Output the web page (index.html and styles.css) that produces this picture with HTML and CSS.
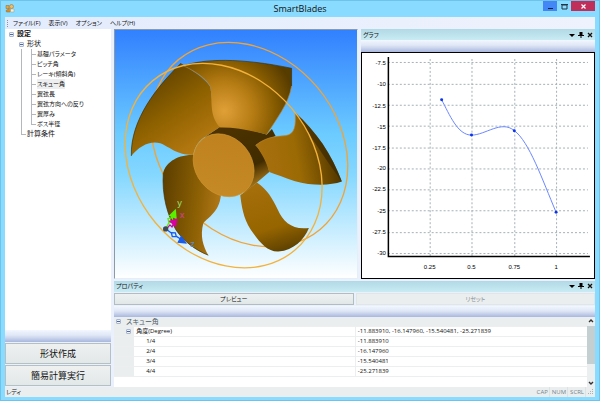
FILE: index.html
```html
<!DOCTYPE html>
<html lang="ja">
<head>
  <meta charset="UTF-8" />
  <meta name="viewport" content="width=device-width, initial-scale=1.0"/>
  <title>SmartBlades</title>
  <link rel="stylesheet" href="styles.css">
</head>
<body>
  <div class="window">
    <header class="titlebar">
      <svg class="appIcon" width="10" height="9" viewBox="0 0 20 18">
        <path d="M2 3h6v6H2z" fill="#e9a63c" stroke="#8a6a3a"/>
        <circle cx="13" cy="5" r="4" fill="#f2bd62" stroke="#8a6a3a"/>
        <path d="M2 13l7-4 4 3-3 4H3z" fill="#d98f2a" stroke="#8a6a3a"/>
        <path d="M11 10h7v6h-7z" fill="#f4f0dc" stroke="#9a9a80"/>
      </svg>
      <h1>SmartBlades</h1>
      <div class="winButtons">
        <button class="minimize" aria-label="最小化"><svg width="7" height="7" viewBox="0 0 7 7"><path d="M1 5h5v1H1z" fill="#123"/></svg></button>
        <button class="maximize" aria-label="最大化"><svg width="7" height="7" viewBox="0 0 7 7"><path d="M1 2h5v4H1z" fill="none" stroke="#234"/><path d="M0 1h7v1H0z" fill="#234"/></svg></button>
        <button class="close" aria-label="閉じる"><svg width="7" height="7" viewBox="0 0 7 7"><path d="M1.5 1.5l4 4M5.5 1.5l-4 4" stroke="#fff" stroke-width="1.2"/></svg></button>
      </div>
    </header>

    <div class="client">
      <nav class="menu">
        <span class="grip"></span>
        <button>ファイル(F)</button>
        <button>表示(V)</button>
        <button>オプション</button>
        <button>ヘルプ(H)</button>
      </nav>

      <main class="workspace">
        <aside class="sidebar">
          <ul class="tree">
            <li class="root"><span class="toggle"></span>設定</li>
            <li class="branch"><span class="toggle"></span>形状</li>
            <li class="leaf">基礎パラメータ</li>
            <li class="leaf">ピッチ角</li>
            <li class="leaf">レーキ(傾斜角)</li>
            <li class="leaf selected"><span>スキュー角</span></li>
            <li class="leaf">翼弦長</li>
            <li class="leaf">翼弦方向への反り</li>
            <li class="leaf">翼厚み</li>
            <li class="leaf last">ボス半径</li>
            <li class="branch end">計算条件</li>
          </ul>
          <div class="band"></div>
          <div class="actions">
            <button>形状作成</button>
            <button>簡易計算実行</button>
          </div>
        </aside>

        <div class="content">
          <div class="upper">
            <section class="viewer">
              <svg viewBox="-18 -18 726 744" role="img" aria-label="プロペラ">
                <defs>
                  <linearGradient id="bladeA" x1="0.2" y1="0.1" x2="0.75" y2="0.95">
                    <stop offset="0" stop-color="#5c3f00"/>
                    <stop offset="0.5" stop-color="#8f6200"/>
                    <stop offset="1" stop-color="#b87a12"/>
                  </linearGradient>
                  <radialGradient id="bladeB" gradientUnits="userSpaceOnUse" cx="310" cy="225" r="215">
                    <stop offset="0" stop-color="#e0a038"/>
                    <stop offset="0.4" stop-color="#b67c14"/>
                    <stop offset="0.7" stop-color="#875c00"/>
                    <stop offset="1" stop-color="#573c00"/>
                  </radialGradient>
                  <linearGradient id="bladeC" x1="0" y1="0.5" x2="1" y2="0.35">
                    <stop offset="0" stop-color="#a97010"/>
                    <stop offset="0.45" stop-color="#9b6a04"/>
                    <stop offset="0.75" stop-color="#6d4a00"/>
                    <stop offset="1" stop-color="#3f2b00"/>
                  </linearGradient>
                  <linearGradient id="bladeD" x1="0.3" y1="0" x2="0.6" y2="1">
                    <stop offset="0" stop-color="#a66f0c"/>
                    <stop offset="0.65" stop-color="#966500"/>
                    <stop offset="1" stop-color="#5e4100"/>
                  </linearGradient>
                  <linearGradient id="bladeE" x1="0" y1="0.3" x2="1" y2="0.5">
                    <stop offset="0" stop-color="#5d3f00"/>
                    <stop offset="0.6" stop-color="#8c6004"/>
                    <stop offset="1" stop-color="#b27818"/>
                  </linearGradient>
                  <linearGradient id="hubSide" gradientUnits="userSpaceOnUse" x1="340" y1="280" x2="420" y2="450">
                    <stop offset="0" stop-color="#4b3200"/>
                    <stop offset="0.65" stop-color="#402b00"/>
                    <stop offset="1" stop-color="#b3801c"/>
                  </linearGradient>
                  <linearGradient id="hubFace" x1="0" y1="0" x2="1" y2="1">
                    <stop offset="0" stop-color="#bd801c"/>
                    <stop offset="1" stop-color="#c68a26"/>
                  </linearGradient>
                </defs>

                <!-- rear sweep circle -->
                <ellipse class="ring" cx="385" cy="326" rx="332" ry="267" transform="rotate(50 385 326)"/>

                <!-- blades -->
                <path fill="url(#bladeE)" d="M218 357C166 355 133 383 127 410C122 480 140 540 165 582C188 616 222 642 262 658C246 630 237 600 247 562C262 543 294 530 300 478L250 380Z"/>
                <path fill="url(#bladeD)" d="M358 478L408 440C440 462 453 486 470 520C488 560 514 582 564 576C549 612 520 642 472 647C440 648 417 620 397 592C373 560 364 530 358 478Z"/>
                <path fill="url(#hubSide)" d="M252 303L298 272C350 272 400 284 437 296L453 279L464 300L404 328C425 350 441 380 445 408L370 472L300 400Z"/>
                <path fill="url(#bladeA)" d="M180 82C110 150 28 250 31 360C55 330 88 313 118 322C150 335 165 357 217 357C222 330 235 313 255 301L300 272C275 240 276 200 268 152C245 120 210 103 180 82Z"/>
                <path fill="url(#bladeB)" d="M188 90C245 68 360 65 512 97L512 150C503 205 465 250 437 296C395 285 345 274 298 275C268 243 273 210 270 165C275 142 230 108 188 90Z"/>
                <path fill="url(#bladeC)" d="M523 230C585 285 633 355 663 437C625 450 575 450 520 435C490 425 465 415 445 408C437 380 422 350 404 328C440 299 475 302 495 299C522 294 525 270 523 230Z"/>
                <path fill="#3c2900" d="M523 230C585 285 633 355 663 437C628 390 575 310 523 230Z" opacity="0.7"/>
                <path fill="none" stroke="#b9822a" stroke-width="2" d="M188 90C230 108 275 142 270 165M512 150C503 205 465 250 437 296M404 328C440 299 475 302 495 299C522 294 525 270 523 230"/>
                <path fill="none" stroke="#403000" stroke-width="2" d="M180 82C110 150 28 250 31 360M188 90C245 68 360 65 512 97V150M127 410C122 480 140 540 165 582C188 616 222 642 262 658"/>

                <!-- hub -->
                <ellipse cx="308" cy="388" rx="101" ry="84" transform="rotate(50 308 388)" fill="url(#hubFace)" stroke="#d09530" stroke-width="2"/>

                <!-- front sweep circle -->
                <ellipse class="ring front" cx="308" cy="389" rx="332" ry="267" transform="rotate(50 308 389)"/>

                <!-- axes -->
                <g fill="none" stroke-width="4">
                  <path d="M135 578L146 556M151 545L158 532M141 548l13 -3l2 11l-12 5z" stroke="#5af000"/>
                  <path d="M147 539L163 523L165 547Z" fill="#5af000" stroke="#5af000"/>
                  <path d="M137 579L147 567L153 573L160 560" stroke="#d800a0"/>
                  <path d="M147 556L167 550L164 570Z" fill="#d800a0" stroke="#d800a0"/>
                  <path d="M137 581L152 592M164 600L180 610M151 590L163 591L166 602L154 602Z" stroke="#1a5ce8"/>
                  <path d="M181 602L194 621L172 619Z" fill="#1a5ce8" stroke="#1a5ce8"/>
                  <circle cx="134" cy="579" r="8" fill="#3f4a58"/>
                </g>
                <text class="axisY" x="169" y="510">y</text>
                <text class="axisX" x="176" y="545">x</text>
                <text class="axisZ" x="208" y="633">z</text>
              </svg>
            </section>

            <section class="panel graph">
              <div class="panelHead">
                <h2>グラフ</h2>
                <div class="panelButtons">
                  <button aria-label="メニュー"><svg width="6" height="6" viewBox="0 0 6 6"><path d="M0 2h6L3 5z"/></svg></button>
                  <button aria-label="固定"><svg width="6" height="6" viewBox="0 0 6 6"><path d="M1.5 0h3v3H6v1H0V3h1.5zM2.5 4h1v2h-1z"/></svg></button>
                  <button aria-label="閉じる"><svg width="6" height="6" viewBox="0 0 6 6"><path d="M1 1l4 4M5 1L1 5" stroke="#111" stroke-width="1.3"/></svg></button>
                </div>
              </div>
              <div class="band"></div>
              <div class="plot">
                <svg viewBox="0 0 233 223" role="img" aria-label="スキュー角のグラフ">
                  <g class="grid">
                    <path d="M26 9.5H227M26 31.5H227M26 52.5H227M26 73.5H227M26 95.5H227M26 116.5H227M26 137.5H227M26 158.5H227M26 180.5H227M26 201.5H227"/>
                    <path d="M68.5 6V204M110.5 6V204M153.5 6V204M195.5 6V204"/>
                  </g>
                  <path d="M26.5 4V204.5H229" fill="none" stroke="#000" stroke-width="1.5"/>
                  <path class="curve" d="M80 47C88 62 96 82.5 110 82.5C124 82.5 140 67 153 78C168 89 181 127 195 160"/>
                  <g fill="#0a32f0">
                    <circle cx="80" cy="47" r="1.5"/>
                    <circle cx="110" cy="82.5" r="1.5"/>
                    <circle cx="153" cy="78" r="1.5"/>
                    <circle cx="195" cy="160" r="1.5"/>
                  </g>
                  <g class="ticks tickY">
                    <text x="24" y="12">-7.5</text>
                    <text x="24" y="33">-10</text>
                    <text x="24" y="55">-12.5</text>
                    <text x="24" y="76">-15</text>
                    <text x="24" y="97">-17.5</text>
                    <text x="24" y="118">-20</text>
                    <text x="24" y="139">-22.5</text>
                    <text x="24" y="161">-25</text>
                    <text x="24" y="182">-27.5</text>
                    <text x="24" y="203">-30</text>
                  </g>
                  <g class="ticks tickX">
                    <text x="68" y="217">0.25</text>
                    <text x="110" y="217">0.5</text>
                    <text x="153" y="217">0.75</text>
                    <text x="195" y="217">1</text>
                  </g>
                </svg>
              </div>
            </section>
          </div>

          <section class="panel properties">
            <div class="panelHead">
              <h2>プロパティ</h2>
              <div class="panelButtons">
                <button aria-label="メニュー"><svg width="6" height="6" viewBox="0 0 6 6"><path d="M0 2h6L3 5z"/></svg></button>
                <button aria-label="固定"><svg width="6" height="6" viewBox="0 0 6 6"><path d="M1.5 0h3v3H6v1H0V3h1.5zM2.5 4h1v2h-1z"/></svg></button>
                <button aria-label="閉じる"><svg width="6" height="6" viewBox="0 0 6 6"><path d="M1 1l4 4M5 1L1 5" stroke="#111" stroke-width="1.3"/></svg></button>
              </div>
            </div>
            <div class="propButtons">
              <button>プレビュー</button>
              <button disabled>リセット</button>
            </div>
            <div class="band"></div>
            <div class="propBody">
              <table class="props">
                <tr class="group"><td class="gutter"><span class="toggle"></span></td><th colspan="3">スキュー角</th></tr>
                <tr><td class="gutter"></td><td class="gutter"><span class="toggle"></span></td><th>角度(Degree)</th><td class="value">-11.883910, -16.147960, -15.540481, -25.271839</td></tr>
                <tr class="item"><td class="gutter"></td><td class="gutter"></td><th>1/4</th><td class="value">-11.883910</td></tr>
                <tr class="item"><td class="gutter"></td><td class="gutter"></td><th>2/4</th><td class="value">-16.147960</td></tr>
                <tr class="item"><td class="gutter"></td><td class="gutter"></td><th>3/4</th><td class="value">-15.540481</td></tr>
                <tr class="item"><td class="gutter"></td><td class="gutter"></td><th>4/4</th><td class="value">-25.271839</td></tr>
              </table>
              <div class="scrollbar">
                <button aria-label="上へ"><svg width="6" height="6" viewBox="0 0 6 6"><path d="M1 4l2-2 2 2" fill="none" stroke="#333" stroke-width="1.4"/></svg></button>
                <span class="thumb"></span>
                <button aria-label="下へ"><svg width="6" height="6" viewBox="0 0 6 6"><path d="M1 2l2 2 2-2" fill="none" stroke="#333" stroke-width="1.4"/></svg></button>
              </div>
            </div>
          </section>
        </div>
      </main>

      <footer class="status">
        <span class="ready">レディ</span>
        <span class="key">CAP</span>
        <span class="key">NUM</span>
        <span class="key">SCRL</span>
        <svg width="6" height="6" viewBox="0 0 6 6"><path d="M4 0h1v1H4zM2 2h1v1H2zM4 2h1v1H4zM0 4h1v1H0zM2 4h1v1H2zM4 4h1v1H4z" fill="#aab2b6"/></svg>
      </footer>
    </div>
  </div>
</body>
</html>
```
FILE: styles.css
```css
* {
  box-sizing: border-box;
}

body {
  margin: 0;
  font-family: "Open Sans", "Noto Sans CJK JP", sans-serif;
  font-size: 6px;
  line-height: 10px;
  color: #111;
  font-feature-settings: "palt";
}

h1, h2, ul {
  margin: 0;
  padding: 0;
  font-weight: normal;
}

h2 {
  font-size: 6px;
}

button {
  margin: 0;
  padding: 0;
  border: 0;
  background: none;
  font: inherit;
  font-feature-settings: inherit;
  color: inherit;
}

svg {
  display: block;
}

.window {
  display: flex;
  flex-direction: column;
  min-height: 100vh;
  padding: 0 4px 3px;
  background-color: #89dcff;
  border: 1px solid #6fc3ea;
}

/* title bar */
.titlebar {
  display: grid;
  grid-template-columns: 1fr auto 1fr;
  height: 16px;
}

.appIcon {
  margin-top: 3px;
}

h1 {
  font-size: 9px;
  line-height: 16px;
}

.winButtons {
  display: flex;
  justify-content: flex-end;
}

.winButtons button {
  display: flex;
  align-items: center;
  justify-content: center;
  width: 14px;
  height: 10px;
}

.winButtons .minimize {
  background-color: #4287f5;
}

.winButtons .close {
  width: 24px;
  background-color: #c02f5a;
}

.client {
  display: flex;
  flex-direction: column;
  flex: 1;
  background-color: #eaf1fc;
}

.menu {
  display: flex;
  align-items: center;
  gap: 8px;
  height: 12px;
  padding-left: 2px;
  background: linear-gradient(90deg, #e3ecfd, #eef2fc);
}

.grip {
  width: 1px;
  height: 7px;
  margin-right: -3px;
  border-left: 1px dotted #8a94a4;
}

.workspace {
  display: flex;
  flex: 1;
  gap: 3px;
}

/* left side */
.sidebar {
  display: flex;
  flex-direction: column;
  flex: 0 0 18%;
  background-color: #fff;
}

.tree {
  display: grid;
  grid-auto-rows: 1fr;
  height: 106px;
  margin-bottom: auto;
  list-style: none;
}

.tree li {
  display: flex;
  align-items: center;
  gap: 3px;
  white-space: nowrap;
  background-repeat: no-repeat;
}

.tree .root {
  padding-left: 4px;
  font-size: 7px;
  font-weight: bold;
}

.tree .branch {
  padding-left: 14px;
  font-size: 7px;
}

.tree .end {
  padding-left: 22px;
  background-image: linear-gradient(#b4b8bc, #b4b8bc), linear-gradient(#b4b8bc, #b4b8bc);
  background-size: 1px 50%, 5px 1px;
  background-position: 16px 0, 16px 50%;
}

.tree .leaf {
  padding-left: 32px;
  background-image: linear-gradient(#b4b8bc, #b4b8bc), linear-gradient(#b4b8bc, #b4b8bc), linear-gradient(#b4b8bc, #b4b8bc);
  background-size: 1px 100%, 1px 100%, 5px 1px;
  background-position: 16px 0, 26px 0, 26px 50%;
}

.tree .last {
  background-size: 1px 100%, 1px 50%, 5px 1px;
}

.selected span {
  background-color: #eceeef;
}

.toggle {
  display: flex;
  align-items: center;
  justify-content: center;
  width: 5px;
  height: 5px;
  border: 1px solid #a9b6cc;
  border-radius: 1px;
  background-color: #eef3fb;
}

.toggle::before {
  content: "";
  width: 3px;
  height: 1px;
  background-color: #4a66a8;
}

.band {
  height: 12px;
  background: linear-gradient(#f2f7ff, #dfe7f6 45%, #a9b7de);
}

.properties .band {
  height: 11px;
}

.actions {
  display: flex;
  flex-direction: column;
  gap: 1px;
  padding: 1px 0;
  background-color: #eaf1fc;
}

.actions button {
  height: 21px;
  border: 1px solid #b5c0c4;
  background: linear-gradient(#eff1f1, #e2e7e7);
  font-size: 9px;
}

/* right side */
.content {
  display: flex;
  flex-direction: column;
  flex: 1;
  gap: 2px;
  min-width: 0;
}

.upper {
  display: flex;
  gap: 3px;
}

.viewer {
  flex: 243;
  border: 1px solid #8d9aa6;
  border-right-color: #e6eef8;
  border-bottom-color: #e6eef8;
  background: linear-gradient(#3180ff, #6ccbff 42%, #84d7ff 58%, #fff);
}

.viewer svg {
  width: 100%;
}

.ring {
  fill: none;
  stroke: #f0a438;
  stroke-width: 4;
}

.ring.front {
  stroke: #f3b23c;
}

.viewer text {
  font-family: "Liberation Sans", sans-serif;
  font-size: 28px;
}

.axisY { fill: #9be070; }
.axisX { fill: #d8409c; }
.axisZ { fill: #5a8cd8; }

.panel {
  display: flex;
  flex-direction: column;
}

.graph {
  flex: 235;
}

.properties {
  flex: 1;
}

.panelHead {
  display: flex;
  justify-content: space-between;
  align-items: center;
  height: 11px;
  padding: 0 2px;
  background: linear-gradient(#b1d9e5, #c9ebf4);
}

.panelButtons {
  display: flex;
  gap: 3px;
}

.plot {
  flex: 1;
  border: 1px solid #000;
  background-color: #fff;
}

.plot svg {
  width: 100%;
}

.grid {
  fill: none;
  stroke: #a3b0b4;
  stroke-width: 1;
  stroke-dasharray: 2 2;
}

.curve {
  fill: none;
  stroke: #6a86ff;
  stroke-width: 1;
}

.ticks {
  font-family: "Liberation Sans", sans-serif;
  font-size: 6px;
}

.tickY { text-anchor: end; }
.tickX { text-anchor: middle; }

.propButtons {
  display: flex;
  gap: 2px;
  padding: 1px 0;
}

.propButtons button {
  flex: 1;
  height: 12px;
  border: 1px solid #b2bdc2;
  background: linear-gradient(#eef1f1, #e1e7e7);
}

.propButtons button:disabled {
  border-color: #e0e5e8;
  background: #ebeeee;
  color: #8b959a;
}

.propBody {
  display: flex;
  align-items: flex-start;
  flex: 1;
  background-color: #fff;
}

.props {
  flex: 1;
  border-collapse: collapse;
}

.props td,
.props th {
  height: 10px;
  padding: 0 2px;
  line-height: 9px;
  font-weight: normal;
  text-align: left;
  white-space: nowrap;
  border-bottom: 1px solid #eceeef;
}

.props .gutter {
  width: 10px;
  background-color: #ebeeef;
}

.props .group th {
  background-color: #ebeeef;
  font-size: 7px;
  color: #4a5a66;
}

.props .item th {
  padding-left: 12px;
}

.props .value {
  width: 49%;
  border-left: 1px solid #eceeef;
}

.scrollbar {
  display: flex;
  flex-direction: column;
  align-self: stretch;
  width: 8px;
  background-color: #eceff0;
}

.scrollbar button {
  display: flex;
  align-items: center;
  justify-content: center;
  height: 9px;
}

.thumb {
  flex: 1;
  margin-bottom: 14px;
  background-color: #c3cfd1;
}

.status {
  display: flex;
  align-items: center;
  gap: 2px;
  height: 10px;
  padding: 0 1px;
  background-color: #ebeeef;
}

.ready {
  margin-right: auto;
}

.key {
  padding-right: 1px;
  border-right: 1px solid #dde2e4;
  color: #75858c;
}
```
